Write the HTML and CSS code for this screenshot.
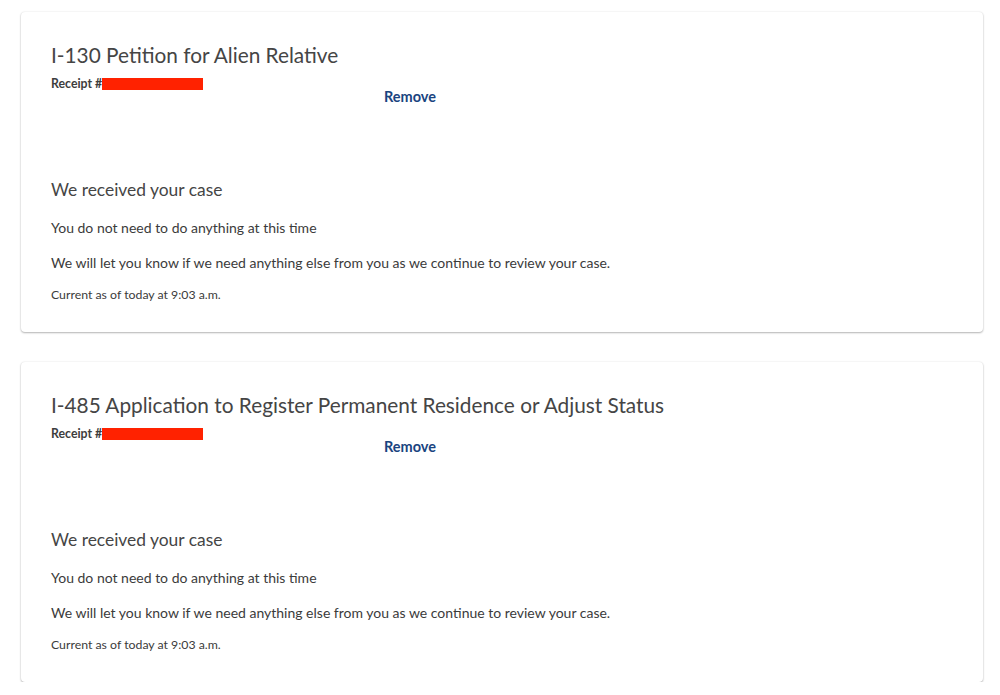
FILE: index.html
```html
<!DOCTYPE html>
<html lang="en">
<head>
<meta charset="utf-8">
<title>Cases</title>
<link rel="stylesheet" href="styles.css">
</head>
<body>
<main class="cases">
  <section class="card">
    <h2 class="title">I-130 Petition for Alien Relative</h2>
    <div class="meta">
      <p class="receipt">Receipt #<span class="redact"></span></p>
      <a class="remove" href="#">Remove</a>
    </div>
    <h3 class="status">We received your case</h3>
    <p class="body">You do not need to do anything at this time</p>
    <p class="body">We will let you know if we need anything else from you as we continue to review your case.</p>
    <p class="small">Current as of today at 9:03 a.m.</p>
  </section>
  <section class="card">
    <h2 class="title">I-485 Application to Register Permanent Residence or Adjust Status</h2>
    <div class="meta">
      <p class="receipt">Receipt #<span class="redact"></span></p>
      <a class="remove" href="#">Remove</a>
    </div>
    <h3 class="status">We received your case</h3>
    <p class="body">You do not need to do anything at this time</p>
    <p class="body">We will let you know if we need anything else from you as we continue to review your case.</p>
    <p class="small">Current as of today at 9:03 a.m.</p>
  </section>
</main>
</body>
</html>
```
FILE: styles.css
```css
html, body {
  margin: 0;
  padding: 0;
  background: #ffffff;
}
body {
  font-family: Lato, "Open Sans", sans-serif;
  color: #3b3b3b;
}
.cases {
  display: flex;
  flex-direction: column;
  gap: 30px;
  padding: 12px 17px 0 21px;
}
.card {
  background: #fff;
  border-radius: 4px;
  box-shadow: 0 0 2px rgba(0,0,0,0.10), 0 1px 2px rgba(0,0,0,0.28);
  padding: 28px 30px 29px 30px;
}
.title {
  margin: 0;
  font-size: 20.8px;
  line-height: 30px;
  font-weight: 400;
  color: #454545;
}
.meta {
  display: flex;
  align-items: flex-start;
  margin-top: 6px;
}
.receipt {
  margin: 0;
  width: 333px;
  font-size: 12.3px;
  line-height: 16px;
  font-weight: 700;
  color: #3d3d3d;
  display: flex;
  align-items: center;
}
.redact {
  display: inline-block;
  width: 101px;
  height: 12px;
  background: #ff2200;
  margin-left: 0;
}
.remove {
  margin-top: 11px;
  font-size: 14.5px;
  line-height: 20px;
  font-weight: 700;
  color: #1a4480;
  text-decoration: none;
}
.status {
  margin: 71px 0 0;
  font-size: 17.4px;
  line-height: 24px;
  font-weight: 400;
  color: #454545;
}
.body {
  margin: 15px 0 0;
  font-size: 14px;
  line-height: 20px;
}
.status + .body {
  margin-top: 16px;
}
.small {
  margin: 14px 0 0;
  font-size: 12.3px;
  line-height: 16px;
}
```
